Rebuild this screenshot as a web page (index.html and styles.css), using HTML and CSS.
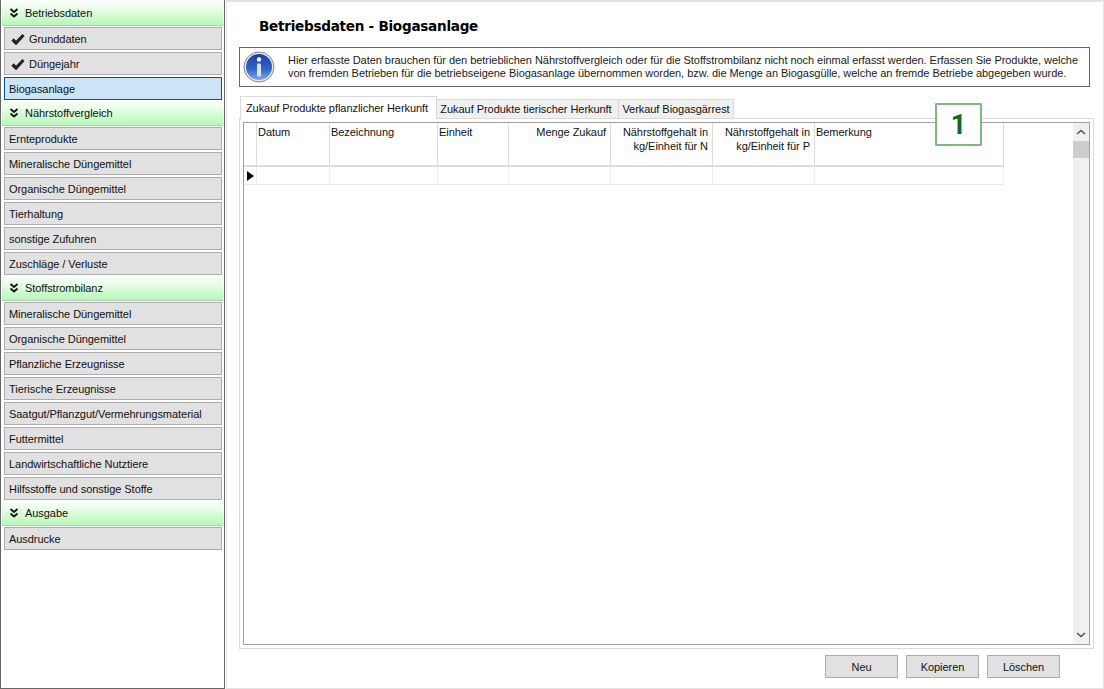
FILE: index.html
```
<!DOCTYPE html>
<html lang="de">
<head>
<meta charset="utf-8">
<title>Betriebsdaten - Biogasanlage</title>
<link rel="stylesheet" href="styles.css">
</head>
<body>
<div class="app">
  <nav class="sidebar">
    <div class="head"><svg class="chev" viewBox="0 0 10 10"><path d="M1.500 1l3.500 3 3.500-3M1.500 5.500l3.500 3 3.500-3" fill="none" stroke="#111" stroke-width="1.800"/></svg>Betriebsdaten</div>
    <div class="item check"><svg class="tick" viewBox="0 0 14 12"><path d="M1.500 6.500l3.500 3.500 7.500-8" fill="none" stroke="#222" stroke-width="3.200"/></svg>Grunddaten</div>
    <div class="item check"><svg class="tick" viewBox="0 0 14 12"><path d="M1.500 6.500l3.500 3.500 7.500-8" fill="none" stroke="#222" stroke-width="3.200"/></svg>Düngejahr</div>
    <div class="item active">Biogasanlage</div>
    <div class="head"><svg class="chev" viewBox="0 0 10 10"><path d="M1.500 1l3.500 3 3.500-3M1.500 5.500l3.500 3 3.500-3" fill="none" stroke="#111" stroke-width="1.800"/></svg>Nährstoffvergleich</div>
    <div class="item">Ernteprodukte</div>
    <div class="item">Mineralische Düngemittel</div>
    <div class="item">Organische Düngemittel</div>
    <div class="item">Tierhaltung</div>
    <div class="item">sonstige Zufuhren</div>
    <div class="item">Zuschläge / Verluste</div>
    <div class="head"><svg class="chev" viewBox="0 0 10 10"><path d="M1.500 1l3.500 3 3.500-3M1.500 5.500l3.500 3 3.500-3" fill="none" stroke="#111" stroke-width="1.800"/></svg>Stoffstrombilanz</div>
    <div class="item">Mineralische Düngemittel</div>
    <div class="item">Organische Düngemittel</div>
    <div class="item">Pflanzliche Erzeugnisse</div>
    <div class="item">Tierische Erzeugnisse</div>
    <div class="item">Saatgut/Pflanzgut/Vermehrungsmaterial</div>
    <div class="item">Futtermittel</div>
    <div class="item">Landwirtschaftliche Nutztiere</div>
    <div class="item">Hilfsstoffe und sonstige Stoffe</div>
    <div class="head"><svg class="chev" viewBox="0 0 10 10"><path d="M1.500 1l3.500 3 3.500-3M1.500 5.500l3.500 3 3.500-3" fill="none" stroke="#111" stroke-width="1.800"/></svg>Ausgabe</div>
    <div class="item">Ausdrucke</div>
  </nav>
  <main class="main">
    <h1 class="title">Betriebsdaten - Biogasanlage</h1>
    <div class="info">
      <svg class="info-icon" viewBox="0 0 32 32">
        <defs><linearGradient id="blue" x1="0" y1="0" x2="0" y2="1"><stop offset="0" stop-color="#1b3f9e"/><stop offset="0.55" stop-color="#2f62c8"/><stop offset="1" stop-color="#7fa6ea"/></linearGradient></defs>
        <circle cx="16" cy="16" r="15" fill="#e6e8ee" stroke="#7d8796" stroke-width="1"/>
        <circle cx="16" cy="16" r="13" fill="url(#blue)"/>
        <circle cx="16" cy="8.500" r="2.200" fill="#f4f6fb"/>
        <rect x="14" y="12.500" width="4" height="13" rx="1" fill="#dfe3ea"/>
      </svg>
      <p class="info-text">Hier erfasste Daten brauchen für den betrieblichen Nährstoffvergleich oder für die Stoffstrombilanz nicht noch einmal erfasst werden. Erfassen Sie Produkte, welche<br>von fremden Betrieben für die betriebseigene Biogasanlage übernommen worden, bzw. die Menge an Biogasgülle, welche an fremde Betriebe abgegeben wurde.</p>
    </div>
    <div class="tabs">
      <div class="tab selected">Zukauf Produkte pflanzlicher Herkunft</div>
      <div class="tab tab2">Zukauf Produkte tierischer Herkunft</div>
      <div class="tab tab3">Verkauf Biogasgärrest</div>
    </div>
    <section class="panel">
      <div class="grid">
        <div class="table">
          <div class="row header">
            <div class="cell c0"></div>
            <div class="cell c1">Datum</div>
            <div class="cell c2">Bezeichnung</div>
            <div class="cell c3">Einheit</div>
            <div class="cell c4 right">Menge Zukauf</div>
            <div class="cell c5 right">Nährstoffgehalt in<br>kg/Einheit für N</div>
            <div class="cell c5 right">Nährstoffgehalt in<br>kg/Einheit für P</div>
            <div class="cell c6">Bemerkung</div>
          </div>
          <div class="row data">
            <div class="cell c0"><span class="pointer"></span></div>
            <div class="cell c1"></div>
            <div class="cell c2"></div>
            <div class="cell c3"></div>
            <div class="cell c4"></div>
            <div class="cell c5"></div>
            <div class="cell c5"></div>
            <div class="cell c6"></div>
          </div>
        </div>
        <div class="scrollbar">
          <svg class="arrow" viewBox="0 0 10 6"><path d="M1 5l4-3.500L9 5" fill="none" stroke="#555" stroke-width="1.600"/></svg>
          <div class="thumb"></div>
          <svg class="arrow down" viewBox="0 0 10 6"><path d="M1 1l4 3.500L9 1" fill="none" stroke="#555" stroke-width="1.600"/></svg>
        </div>
      </div>
    </section>
    <div class="actions">
      <button class="btn">Neu</button>
      <button class="btn">Kopieren</button>
      <button class="btn">Löschen</button>
    </div>
    <div class="callout">1</div>
  </main>
</div>
</body>
</html>
```
FILE: styles.css
```
* { box-sizing: border-box; }
html, body { margin: 0; padding: 0; }
body {
  width: 1104px;
  height: 689px;
  overflow: hidden;
  background: #fff;
  font-family: "Liberation Sans", sans-serif;
  font-size: 11px;
  letter-spacing: -0.05px;
  color: #111;
}
.app { display: flex; height: 689px; }

.sidebar {
  width: 225px;
  flex: none;
  height: 689px;
  border: 1px solid #666;
  border-top: 0;
  padding: 1px 1px 0 1px;
  display: flex;
  flex-direction: column;
  align-items: stretch;
}
.head {
  height: 25px;
  flex: none;
  padding-left: 7px;
  display: flex;
  align-items: center;
  background: linear-gradient(#f6fff6 0%, #effdef 25%, #b6f7b6 100%);
  border-bottom: 1px solid #b5c9b5;
}
.chev { width: 10px; height: 10px; margin-right: 6px; flex: none; }
.item {
  height: 23px;
  flex: none;
  margin: 1px 1px 1px 2px;
  padding-left: 4px;
  display: flex;
  align-items: center;
  background: #e1e1e1;
  border: 1px solid #adadad;
  white-space: nowrap;
}
.item.check { padding-left: 6px; }
.item.active { background: #cce4f7; border-color: #005499; }
.tick { width: 14px; height: 12px; margin-right: 4px; flex: none; }

.main {
  position: relative;
  flex: 1;
  height: 689px;
  margin-left: 1px;
  border-top: 2px solid #e3e3e3;
  border-bottom: 1px solid #e3e3e3;
  border-right: 1px solid #e3e3e3;
  border-left: 1px solid #e3e3e3;
  display: flex;
  flex-direction: column;
  padding: 0 0 0 12px;
}
.title {
  margin: 0 0 0 20px;
  height: 45px;
  font-family: "DejaVu Sans", sans-serif;
  font-size: 13.6px;
  font-weight: 700;
  letter-spacing: -0.28px;
  line-height: 49px;
  color: #000;
}
.info {
  width: 851px;
  height: 40px;
  border: 1px solid #666;
  display: flex;
  align-items: center;
  flex: none;
}
.info-icon { width: 32px; height: 32px; margin-left: 3px; flex: none; }
.info-text {
  margin: 0 0 0 13px;
  line-height: 13px;
  white-space: nowrap;
  color: #1a1a1a;
}
.tabs {
  display: flex;
  align-items: flex-end;
  height: 22px;
  margin-top: 9px;
  position: relative;
  z-index: 1;
  flex: none;
}
.tab {
  height: 19px;
  background: #f0f0f0;
  border: 1px solid #d9d9d9;
  border-bottom: 0;
  display: flex;
  align-items: center;
  justify-content: center;
  white-space: nowrap;
}
.tab.selected { width: 197px; height: 23px; background: #fff; margin-left: 1px; margin-bottom: -1px; padding-right: 3px; }
.tab2 { width: 182px; border-left: 0; padding-right: 3px; }
.tab3 { width: 115px; border-left: 0; }

.panel {
  width: 855px;
  height: 531px;
  border: 1px solid #d9d9d9;
  padding: 3px;
  flex: none;
}
.grid {
  position: relative;
  display: flex;
  justify-content: space-between;
  height: 100%;
  border: 1px solid #a0a0a0;
  background: #fff;
}
.table { width: 760px; }
.row { display: flex; }
.header { height: 44px; border-bottom: 2px solid #dcdcdc; }
.data { height: 18px; border-bottom: 1px solid #e8e8e8; }
.cell {
  height: 100%;
  border-right: 1px solid #e4e4e4;
  padding: 2px 1px 0 1px;
  line-height: 14px;
  flex: none;
}
.header .cell { border-right-color: #dcdcdc; padding-top: 2px; }
.data .cell { border-right-color: #eeeeee; }
.header .right { text-align: right; padding-right: 4px; }
.c0 { width: 13px; }
.c1 { width: 73px; }
.c2 { width: 108px; }
.c3 { width: 71px; }
.c4 { width: 102px; }
.c5 { width: 102px; }
.c6 { width: 189px; }
.pointer {
  display: block;
  width: 0;
  height: 0;
  margin: 2px 0 0 2px;
  border-left: 7px solid #000;
  border-top: 5.5px solid transparent;
  border-bottom: 5.5px solid transparent;
}
.scrollbar {
  width: 16px;
  height: 100%;
  background: #f0f0f0;
  display: flex;
  flex-direction: column;
  align-items: center;
  flex: none;
}
.arrow { width: 10px; height: 6px; margin-top: 6px; flex: none; }
.arrow.down { margin-top: auto; margin-bottom: 6px; }
.thumb { width: 16px; height: 17px; background: #cdcdcd; margin-top: 6px; flex: none; }

.actions {
  display: flex;
  gap: 8px;
  margin-top: 6px;
  padding-left: 586px;
  flex: none;
}
.btn {
  width: 73px;
  height: 23px;
  background: #e1e1e1;
  border: 1px solid #adadad;
  font: inherit;
  letter-spacing: inherit;
  color: #111;
  padding: 0;
}
.callout {
  position: absolute;
  left: 708px;
  top: 101px;
  width: 47px;
  height: 43px;
  background: #fff;
  border: 2px solid #7bba80;
  border-radius: 1px;
  display: flex;
  align-items: center;
  justify-content: center;
  font-family: Roboto, sans-serif;
  font-weight: 700;
  font-size: 27px;
  color: #0f6b1e;
  z-index: 2;
}
```
